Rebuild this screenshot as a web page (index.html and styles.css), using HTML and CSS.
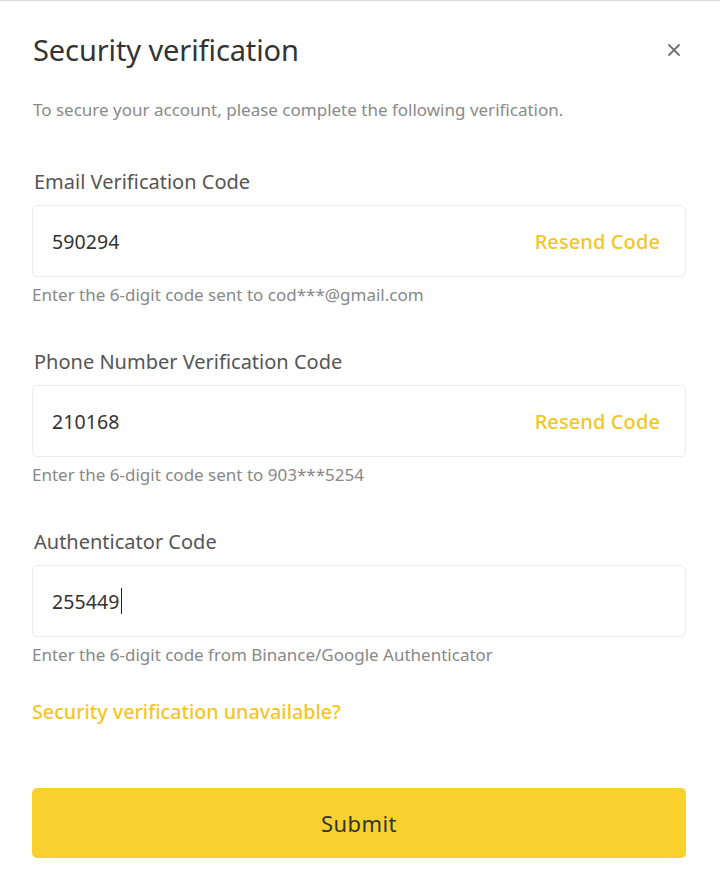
FILE: index.html
```html
<!DOCTYPE html>
<html lang="en">
<head>
<meta charset="utf-8">
<title>Security verification</title>
<link rel="stylesheet" href="styles.css">
</head>
<body>
<div class="modal">
  <div class="header">
    <h1 class="title">Security verification</h1>
    <span class="close" aria-label="Close">
      <svg width="12" height="12" viewBox="0 0 12 12"><path d="M1 1L11 11M11 1L1 11" stroke="#707070" stroke-width="1.8" stroke-linecap="round"/></svg>
    </span>
  </div>
  <p class="subtitle">To secure your account, please complete the following verification.</p>

  <div class="field">
    <div class="label">Email Verification Code</div>
    <div class="input">
      <span class="value">590294</span>
      <span class="resend">Resend Code</span>
    </div>
    <div class="help">Enter the 6-digit code sent to cod***@gmail.com</div>
  </div>

  <div class="field">
    <div class="label">Phone Number Verification Code</div>
    <div class="input">
      <span class="value">210168</span>
      <span class="resend">Resend Code</span>
    </div>
    <div class="help">Enter the 6-digit code sent to 903***5254</div>
  </div>

  <div class="field">
    <div class="label">Authenticator Code</div>
    <div class="input">
      <span class="value">255449<span class="caret"></span></span>
    </div>
    <div class="help">Enter the 6-digit code from Binance/Google Authenticator</div>
  </div>

  <a class="link" href="#">Security verification unavailable?</a>

  <button class="submit" type="button">Submit</button>
</div>
</body>
</html>
```

FILE: styles.css
```css
html, body {
  margin: 0;
  padding: 0;
  background: #ffffff;
}
body {
  font-family: "Noto Sans", "DejaVu Sans", sans-serif;
  border-top: 1px solid #d9d9d9;
}
.modal {
  width: 654px;
  padding: 0 34px 0 32px;
  display: flex;
  flex-direction: column;
}
.header {
  display: flex;
  justify-content: space-between;
  align-items: center;
  padding-top: 29px;
}
.title {
  margin: 0 0 0 1px;
  font-size: 29px;
  line-height: 40px;
  font-weight: 400;
  color: #333333;
  letter-spacing: -0.1px;
}
.close {
  display: flex;
  margin-right: 6px;
}
.subtitle {
  margin: 28px 0 0 1px;
  font-size: 17px;
  line-height: 24px;
  color: #8a8a8a;
}
.field {
  display: flex;
  flex-direction: column;
  margin-top: 48px;
}
.field + .field {
  margin-top: 45px;
}
.label {
  font-size: 20px;
  line-height: 24px;
  color: #555555;
  margin-left: 2px;
}
.input {
  margin-top: 11px;
  height: 70px;
  border: 1px solid #ececec;
  border-radius: 5px;
  display: flex;
  align-items: center;
  justify-content: space-between;
  padding: 0 25px 0 19px;
}
.value {
  font-size: 19.5px;
  color: #333333;
  display: flex;
  align-items: center;
  letter-spacing: 0.1px;
}
.caret {
  display: inline-block;
  width: 1px;
  height: 26px;
  background: #222;
  margin-left: 1px;
}
.resend {
  font-size: 20px;
  font-weight: 500;
  color: #f3c623;
  letter-spacing: 0.1px;
}
.help {
  margin-top: 8px;
  font-size: 17px;
  line-height: 20px;
  color: #888888;
}
.link {
  margin-top: 35px;
  font-size: 19.7px;
  line-height: 24px;
  font-weight: 500;
  color: #f3c623;
  text-decoration: none;
  align-self: flex-start;
}
.submit {
  margin-top: 64px;
  height: 70px;
  border: none;
  border-radius: 5px;
  background: #f8d12f;
  color: #333333;
  font-family: inherit;
  font-size: 22px;
  letter-spacing: 0.4px;
  cursor: pointer;
}
```
